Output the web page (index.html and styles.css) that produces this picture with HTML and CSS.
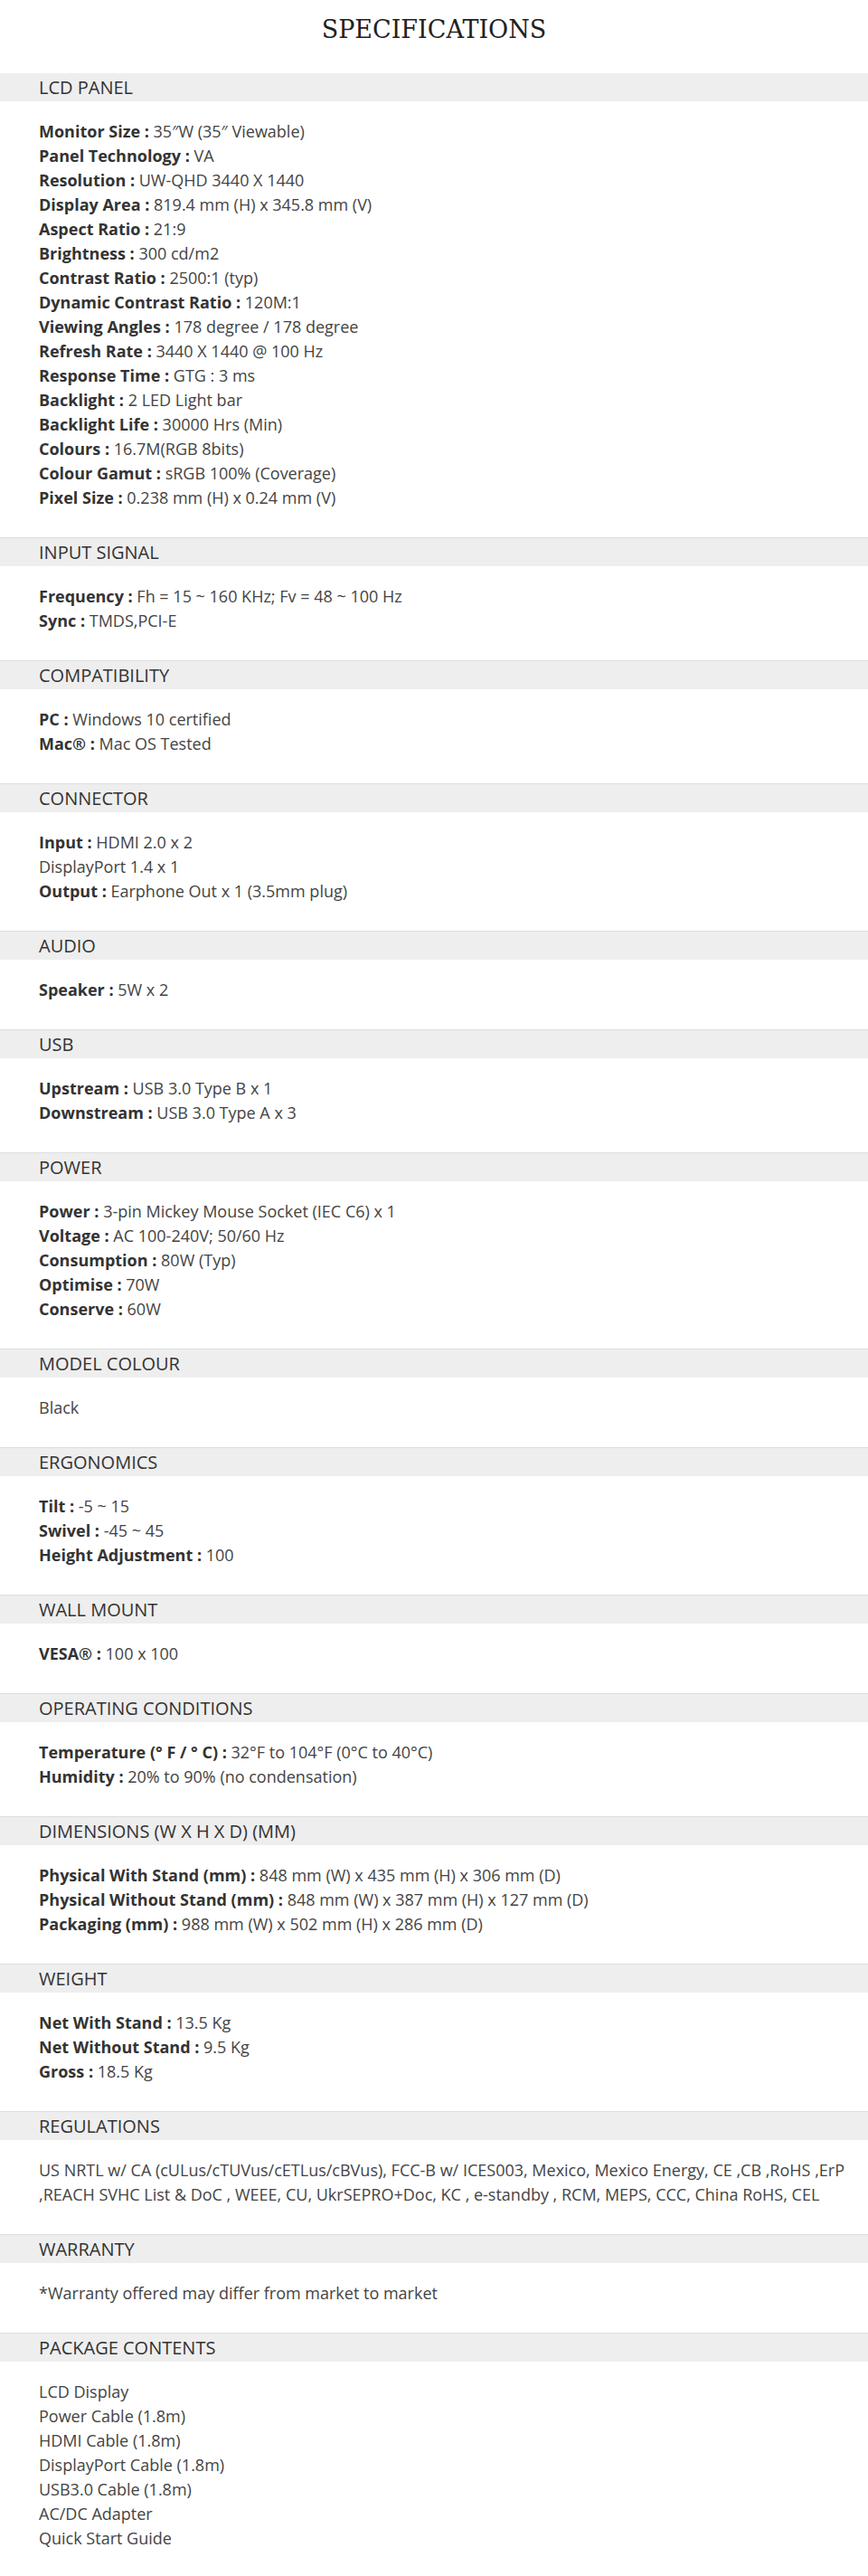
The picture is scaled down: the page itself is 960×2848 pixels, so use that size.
FILE: index.html
```html
<!DOCTYPE html>
<html>
<head>
    <title>Specifications</title>
    <meta charset="UTF-8">
    <link rel="stylesheet" href="styles.css">
</head>
<body>
    <h1>SPECIFICATIONS</h1>

    <div class="spec first">
        <div class="spec-title">LCD PANEL</div>
        <div class="spec-body">
            <p><b>Monitor Size :</b> 35″W (35″ Viewable)</p>
            <p><b>Panel Technology :</b> VA</p>
            <p><b>Resolution :</b> UW-QHD 3440 X 1440</p>
            <p><b>Display Area :</b> 819.4 mm (H) x 345.8 mm (V)</p>
            <p><b>Aspect Ratio :</b> 21:9</p>
            <p><b>Brightness :</b> 300 cd/m2</p>
            <p><b>Contrast Ratio :</b> 2500:1 (typ)</p>
            <p><b>Dynamic Contrast Ratio :</b> 120M:1</p>
            <p><b>Viewing Angles :</b> 178 degree / 178 degree</p>
            <p><b>Refresh Rate :</b> 3440 X 1440 @ 100 Hz</p>
            <p><b>Response Time :</b> GTG : 3 ms</p>
            <p><b>Backlight :</b> 2 LED Light bar</p>
            <p><b>Backlight Life :</b> 30000 Hrs (Min)</p>
            <p><b>Colours :</b> 16.7M(RGB 8bits)</p>
            <p><b>Colour Gamut :</b> sRGB 100% (Coverage)</p>
            <p><b>Pixel Size :</b> 0.238 mm (H) x 0.24 mm (V)</p>
        </div>
    </div>

    <div class="spec">
        <div class="spec-title">INPUT SIGNAL</div>
        <div class="spec-body">
            <p><b>Frequency :</b> Fh = 15 ~ 160 KHz; Fv = 48 ~ 100 Hz</p>
            <p><b>Sync :</b> TMDS,PCI-E</p>
        </div>
    </div>

    <div class="spec">
        <div class="spec-title">COMPATIBILITY</div>
        <div class="spec-body">
            <p><b>PC :</b> Windows 10 certified</p>
            <p><b>Mac® :</b> Mac OS Tested</p>
        </div>
    </div>

    <div class="spec">
        <div class="spec-title">CONNECTOR</div>
        <div class="spec-body">
            <p><b>Input :</b> HDMI 2.0 x 2</p>
            <p>DisplayPort 1.4 x 1</p>
            <p><b>Output :</b> Earphone Out x 1 (3.5mm plug)</p>
        </div>
    </div>

    <div class="spec">
        <div class="spec-title">AUDIO</div>
        <div class="spec-body">
            <p><b>Speaker :</b> 5W x 2</p>
        </div>
    </div>

    <div class="spec">
        <div class="spec-title">USB</div>
        <div class="spec-body">
            <p><b>Upstream :</b> USB 3.0 Type B x 1</p>
            <p><b>Downstream :</b> USB 3.0 Type A x 3</p>
        </div>
    </div>

    <div class="spec">
        <div class="spec-title">POWER</div>
        <div class="spec-body">
            <p><b>Power :</b> 3-pin Mickey Mouse Socket (IEC C6) x 1</p>
            <p><b>Voltage :</b> AC 100-240V; 50/60 Hz</p>
            <p><b>Consumption :</b> 80W (Typ)</p>
            <p><b>Optimise :</b> 70W</p>
            <p><b>Conserve :</b> 60W</p>
        </div>
    </div>

    <div class="spec">
        <div class="spec-title">MODEL COLOUR</div>
        <div class="spec-body">
            <p>Black</p>
        </div>
    </div>

    <div class="spec">
        <div class="spec-title">ERGONOMICS</div>
        <div class="spec-body">
            <p><b>Tilt :</b> -5 ~ 15</p>
            <p><b>Swivel :</b> -45 ~ 45</p>
            <p><b>Height Adjustment :</b> 100</p>
        </div>
    </div>

    <div class="spec">
        <div class="spec-title">WALL MOUNT</div>
        <div class="spec-body">
            <p><b>VESA® :</b> 100 x 100</p>
        </div>
    </div>

    <div class="spec">
        <div class="spec-title">OPERATING CONDITIONS</div>
        <div class="spec-body">
            <p><b>Temperature (° F / ° C) :</b> 32°F to 104°F (0°C to 40°C)</p>
            <p><b>Humidity :</b> 20% to 90% (no condensation)</p>
        </div>
    </div>

    <div class="spec">
        <div class="spec-title">DIMENSIONS (W X H X D) (MM)</div>
        <div class="spec-body">
            <p><b>Physical With Stand (mm) :</b> 848 mm (W) x 435 mm (H) x 306 mm (D)</p>
            <p><b>Physical Without Stand (mm) :</b> 848 mm (W) x 387 mm (H) x 127 mm (D)</p>
            <p><b>Packaging (mm) :</b> 988 mm (W) x 502 mm (H) x 286 mm (D)</p>
        </div>
    </div>

    <div class="spec">
        <div class="spec-title">WEIGHT</div>
        <div class="spec-body">
            <p><b>Net With Stand :</b> 13.5 Kg</p>
            <p><b>Net Without Stand :</b> 9.5 Kg</p>
            <p><b>Gross :</b> 18.5 Kg</p>
        </div>
    </div>

    <div class="spec">
        <div class="spec-title">REGULATIONS</div>
        <div class="spec-body">
            <p>US NRTL w/ CA (cULus/cTUVus/cETLus/cBVus), FCC-B w/ ICES003, Mexico, Mexico Energy, CE ,CB ,RoHS ,ErP ,REACH SVHC List &amp; DoC , WEEE, CU, UkrSEPRO+Doc, KC , e-standby , RCM, MEPS, CCC, China RoHS, CEL</p>
        </div>
    </div>

    <div class="spec">
        <div class="spec-title">WARRANTY</div>
        <div class="spec-body">
            <p>*Warranty offered may differ from market to market</p>
        </div>
    </div>

    <div class="spec">
        <div class="spec-title">PACKAGE CONTENTS</div>
        <div class="spec-body">
            <p>LCD Display</p>
            <p>Power Cable (1.8m)</p>
            <p>HDMI Cable (1.8m)</p>
            <p>DisplayPort Cable (1.8m)</p>
            <p>USB3.0 Cable (1.8m)</p>
            <p>AC/DC Adapter</p>
            <p>Quick Start Guide</p>
        </div>
    </div>
</body>
</html>
```

FILE: styles.css
```css
body {
    font-family: "Open Sans", "Noto Sans", sans-serif;
    margin: 0;
    color: #333;
    background: #fff;
}
h1 {
    font-family: "DejaVu Serif", serif;
    font-weight: normal;
    font-size: 27px;
    line-height: 40px;
    text-align: center;
    color: #222;
    margin: 0 0 28px;
    padding-top: 13px;
}
.spec {
    border-top: 1px solid #ddd;
}
.spec.first {
    border-top: none;
}
.spec-title {
    background: #eee;
    font-size: 20px;
    line-height: 31px;
    padding: 0 43px;
    color: #333;
}
.spec-body {
    padding: 20px 20px 30px 43px;
    font-size: 18px;
    line-height: 27px;
    color: #444;
}
.spec-body p {
    margin: 0;
}
.spec-body b {
    color: #333;
}
```
